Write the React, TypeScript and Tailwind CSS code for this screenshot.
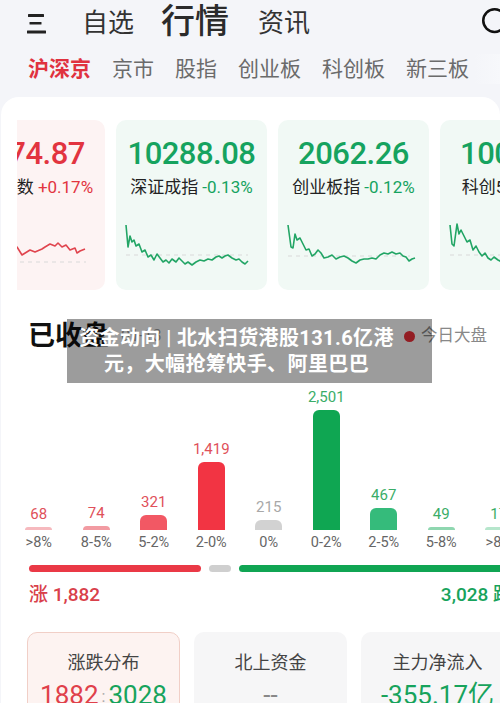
import React from 'react';
import { Search } from 'lucide-react';

type Pt = [number, number];

const redLine: Pt[] = [
    [0, 30], [6, 26], [12, 29], [18, 24], [24, 27], [30, 25], [36, 28], [42, 24], [48, 27],
    [53, 25], [58, 33], [66, 28], [71, 30], [78, 27], [81, 25], [86, 22], [91, 24], [94, 21],
    [98, 25], [102, 23], [106, 28], [111, 26], [113, 31], [116, 29], [121, 27],
];

const szLine: Pt[] = [
    [0, 3], [2, 25], [4, 14], [6, 20], [8, 18], [10, 24], [13, 22], [16, 30], [19, 28], [22, 35],
    [25, 33], [28, 38], [31, 32], [34, 36], [37, 40], [40, 38], [43, 41], [46, 37], [50, 40],
    [53, 36], [56, 39], [59, 42], [62, 40], [66, 43], [70, 40], [74, 38], [78, 39], [82, 37],
    [86, 38], [90, 35], [93, 34], [96, 36], [99, 34], [102, 33], [106, 36], [110, 38], [113, 37],
    [116, 40], [119, 42], [122, 39],
];

const cyLine: Pt[] = [
    [0, 3], [3, 25], [5, 26], [7, 12], [9, 18], [12, 16], [15, 22], [18, 28], [21, 27], [24, 34],
    [27, 32], [30, 28], [33, 31], [36, 36], [40, 35], [44, 33], [48, 37], [52, 35], [56, 34],
    [60, 36], [64, 39], [68, 41], [72, 38], [76, 37], [80, 37], [84, 36], [88, 37], [92, 33],
    [96, 31], [100, 32], [104, 30], [108, 32], [112, 31], [115, 34], [118, 35], [121, 39],
    [124, 37], [127, 36],
];

const kcLine: Pt[] = [
    [0, 3], [2, 22], [4, 24], [7, 2], [9, 12], [11, 8], [14, 14], [17, 20], [20, 18], [23, 28],
    [26, 24], [29, 30], [32, 34], [35, 31], [38, 36], [41, 38], [44, 35], [48, 38], [52, 40],
];

const Spark = ({ pts, color, dashY }: { pts: Pt[]; color: string; dashY: number }) => (
    <svg width="130" height="45" viewBox="0 0 130 45" className="self-start ml-[10px] mt-[24px] overflow-visible">
        <line x1="0" y1={dashY} x2="122" y2={dashY} stroke="#d9d9d9" strokeWidth="1" strokeDasharray="4 4" />
        <polyline points={pts.map(p => p.join(',')).join(' ')} fill="none" stroke={color} strokeWidth="1.6" strokeLinejoin="round" />
    </svg>
);

const indices = [
    { name: '上证指数', value: '3274.87', pct: '+0.17%', up: true, pts: redLine, dash: 40 },
    { name: '深证成指', value: '10288.08', pct: '-0.13%', up: false, pts: szLine, dash: 33 },
    { name: '创业板指', value: '2062.26', pct: '-0.12%', up: false, pts: cyLine, dash: 34 },
    { name: '科创50', value: '1003.85', pct: '-0.21%', up: false, pts: kcLine, dash: 33 },
];

const bars = [
    { v: '68', h: 3, bar: 'bg-[#f6b9be]', txt: 'text-[#e0505a]', label: '>8%' },
    { v: '74', h: 4, bar: 'bg-[#f29ba2]', txt: 'text-[#e0505a]', label: '8-5%' },
    { v: '321', h: 15, bar: 'bg-[#f25864]', txt: 'text-[#e0505a]', label: '5-2%' },
    { v: '1,419', h: 68, bar: 'bg-[#f23443]', txt: 'text-[#e0505a]', label: '2-0%' },
    { v: '215', h: 10, bar: 'bg-[#d2d2d2]', txt: 'text-[#a8a8a8]', label: '0%' },
    { v: '2,501', h: 120, bar: 'bg-[#0fa652]', txt: 'text-[#3aad68]', label: '0-2%' },
    { v: '467', h: 22, bar: 'bg-[#35bb7b]', txt: 'text-[#3aad68]', label: '2-5%' },
    { v: '49', h: 3, bar: 'bg-[#8fd7b0]', txt: 'text-[#3aad68]', label: '5-8%' },
    { v: '17', h: 3, bar: 'bg-[#b6e6cc]', txt: 'text-[#3aad68]', label: '>8%' },
];

const tabs = ['京市', '股指', '创业板', '科创板', '新三板'];

export default function App() {
    return (
        <div className="relative w-[500px] h-[703px] overflow-hidden bg-[#f4f5f9] text-[#333]" style={{ fontFamily: 'Roboto, "Noto Sans CJK SC", sans-serif' }}>
            {/* top nav */}
            <div className="flex items-center h-[46px] pl-[27px] mr-[-13px]">
                <svg width="19" height="21" viewBox="0 0 19 21" className="shrink-0">
                    <rect x="1" y="1" width="16" height="3" rx="0.5" fill="#222" />
                    <rect x="2.5" y="9" width="12" height="2.6" rx="0.5" fill="#222" />
                    <rect x="0" y="17.5" width="19" height="3" rx="0.5" fill="#222" />
                </svg>
                <span className="ml-[36px] text-[26px] leading-none text-[#333]">自选</span>
                <span className="ml-[27px] text-[34px] leading-none font-medium text-[#2b2b2b] -mt-[4px]">行情</span>
                <span className="ml-[29px] text-[26px] leading-none text-[#333]">资讯</span>
                <Search size={34} strokeWidth={1.8} className="ml-auto text-[#111] -mt-[2px]" />
            </div>

            {/* market tabs */}
            <div className="relative flex items-center gap-[21px] h-[46px] pl-[28px] text-[21px] leading-none whitespace-nowrap">
                <span className="font-bold text-[#e0323f]">沪深京</span>
                {tabs.map(t => (
                    <span key={t} className="text-[#6b6b6b]">{t}</span>
                ))}
                <div className="absolute right-0 top-[8px] h-[30px] w-[26px] bg-gradient-to-r from-[#f4f5f9]/0 to-[#f7f8fb]" />
            </div>

            {/* main white card */}
            <div className="mt-[5px] ml-[1px] bg-white rounded-t-[18px] pt-[23px]">
                <div className="ml-[16px] overflow-hidden">
                    <div className="flex gap-[11px] -ml-[63px]">
                        {indices.map(ix => (
                            <div
                                key={ix.name}
                                className={`shrink-0 w-[151px] h-[170px] rounded-[10px] flex flex-col items-center pt-[16px] ${ix.up ? 'bg-[#fdf3f3]' : 'bg-[#f1f9f5]'}`}
                            >
                                <div className={`text-[31px] leading-[36px] tracking-[-0.5px] font-medium ${ix.up ? 'text-[#e2343f]' : 'text-[#16a35f]'}`}>{ix.value}</div>
                                <div className="mt-[4px] text-[17px] leading-[22px] whitespace-nowrap">
                                    <span className="text-[#222]">{ix.name}</span>
                                    <span className={`ml-[4px] ${ix.up ? 'text-[#e2343f]' : 'text-[#16a35f]'}`}>{ix.pct}</span>
                                </div>
                                <Spark pts={ix.pts} color={ix.up ? '#e0444e' : '#22a565'} dashY={ix.dash} />
                            </div>
                        ))}
                    </div>
                </div>

                {/* status row */}
                <div className="mt-[28px] h-[36px] flex items-center pl-[27px] pr-[13px]">
                    <span className="text-[27px] font-bold leading-none text-[#111]">已收盘</span>
                    <span className="ml-[12px] text-[16px] text-[#999]">01-13</span>
                    <span className="ml-auto w-[11px] h-[11px] rounded-full bg-[#f0303a]" />
                    <span className="ml-[6px] text-[16.5px] text-[#888]">今日大盘</span>
                </div>

                {/* distribution chart */}
                <div className="flex pl-[9px] h-[176px] items-end">
                    {bars.map((b, i) => (
                        <div key={i} className="shrink-0 w-[57.5px] flex flex-col items-center justify-end">
                            <span className={`text-[15px] leading-[15px] mb-[5px] ${b.txt}`}>{b.v}</span>
                            <div className={`w-[27px] rounded-t-[6px] ${b.bar}`} style={{ height: b.h }} />
                        </div>
                    ))}
                </div>
                <div className="flex pl-[9px] mt-[5px] h-[16px]">
                    {bars.map((b, i) => (
                        <div key={i} className="shrink-0 w-[57.5px] text-center text-[14.5px] leading-[16px] text-[#666]">{b.label}</div>
                    ))}
                </div>

                {/* ratio bar */}
                <div className="flex items-center gap-[8px] pl-[28px] mt-[14px] mr-[-20px] h-[7px]">
                    <div className="w-[172px] h-[7px] rounded-full bg-[#ea3946]" />
                    <div className="w-[22px] h-[7px] rounded-full bg-[#cfcfcf]" />
                    <div className="flex-1 h-[7px] rounded-full bg-[#10a553]" />
                </div>
                <div className="flex justify-between items-center pl-[28px] mr-[-12px] mt-[11px] h-[24px] text-[19px] font-medium whitespace-nowrap">
                    <span className="text-[#d9404a]">涨 1,882</span>
                    <span className="text-[#17a35c]">3,028 跌</span>
                </div>

                {/* summary cards */}
                <div className="flex gap-[14px] pl-[26px] mt-[25px]">
                    <div className="shrink-0 w-[153px] h-[100px] rounded-[10px] bg-[#fdf3f1] border border-[#f1cfc7] flex flex-col items-center pt-[18px]">
                        <span className="text-[18px] leading-[24px] text-[#444]">涨跌分布</span>
                        <div className="mt-[5px] text-[26px] leading-[30px] whitespace-nowrap">
                            <span className="text-[#e0404a]">1882</span>
                            <span className="text-[#aaa] text-[16px] mx-[3px] align-middle">:</span>
                            <span className="text-[#17a35c]">3028</span>
                        </div>
                    </div>
                    <div className="shrink-0 w-[153px] h-[100px] rounded-[10px] bg-[#f6f6f7] flex flex-col items-center pt-[19px]">
                        <span className="text-[18px] leading-[24px] text-[#444]">北上资金</span>
                        <span className="mt-[5px] text-[26px] leading-[30px] text-[#888]">--</span>
                    </div>
                    <div className="shrink-0 w-[153px] h-[100px] rounded-[10px] bg-[#f6f6f7] flex flex-col items-center pt-[19px]">
                        <span className="text-[18px] leading-[24px] text-[#444]">主力净流入</span>
                        <span className="mt-[5px] text-[26px] leading-[30px] text-[#17a35c] whitespace-nowrap">-355.17亿</span>
                    </div>
                </div>
            </div>

            {/* news overlay */}
            <div className="absolute left-[67px] top-[319px] w-[365px] h-[64px] bg-[rgba(0,0,0,0.39)] flex flex-col items-center justify-center pr-[26px] text-white font-bold text-[20px] leading-[26px] tracking-[0.4px] whitespace-nowrap">
                <span>资金动向 | 北水扫货港股131.6亿港</span>
                <span>元，大幅抢筹快手、阿里巴巴</span>
            </div>
        </div>
    );
}
